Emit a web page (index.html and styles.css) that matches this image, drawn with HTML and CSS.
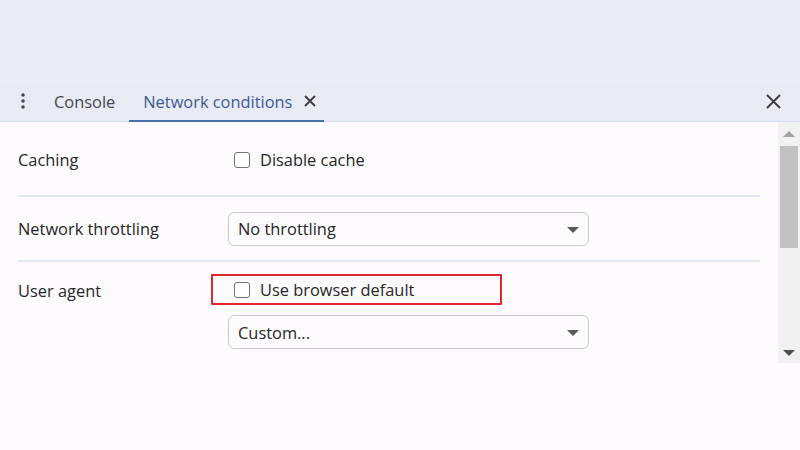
FILE: index.html
```html
<!DOCTYPE html>
<html>
<head>
<meta charset="utf-8">
<link rel="stylesheet" href="styles.css">
</head>
<body>
<div class="top"></div>
<div class="tabbar">
  <div class="menu">
    <svg width="6" height="16" viewBox="0 0 6 16"><circle cx="3" cy="2" r="1.8"/><circle cx="3" cy="8" r="1.8"/><circle cx="3" cy="14" r="1.8"/></svg>
  </div>
  <div class="tab">Console</div>
  <div class="tab active">Network conditions
    <svg class="tabx" width="12" height="12" viewBox="0 0 12 12"><path d="M1 1L11 11M11 1L1 11"/></svg>
  </div>
  <div class="spacer"></div>
  <div class="close">
    <svg width="15" height="15" viewBox="0 0 15 15"><path d="M1 1L14 14M14 1L1 14"/></svg>
  </div>
</div>
<div class="main">
  <div class="content">
    <div class="row row1">
      <div class="label">Caching</div>
      <div class="value">
        <label class="check"><span class="box"></span>Disable cache</label>
      </div>
    </div>
    <div class="row row2">
      <div class="label">Network throttling</div>
      <div class="value">
        <div class="select">No throttling<span class="arrow"></span></div>
      </div>
    </div>
    <div class="row row3">
      <div class="label">User agent</div>
      <div class="value stack">
        <div class="highlighted">
          <label class="check"><span class="box"></span>Use browser default</label>
          <div class="redbox"></div>
        </div>
        <div class="select">Custom...<span class="arrow"></span></div>
      </div>
    </div>
  </div>
  <div class="scrollbar">
    <div class="sb-up"></div>
    <div class="sb-thumb"></div>
    <div class="sb-track"></div>
    <div class="sb-down"></div>
  </div>
</div>
</body>
</html>
```
FILE: styles.css
```css
* { box-sizing: border-box; }
html, body { margin: 0; padding: 0; }
body {
  width: 800px;
  height: 450px;
  overflow: hidden;
  background: #fdfbfe;
  font-family: "Open Sans", "Noto Sans", sans-serif;
  font-size: 16.4px;
  color: #262626;
}
.top {
  height: 80px;
  background: #e8eaf4;
}
.tabbar {
  height: 42px;
  background: #e8eaf4;
  border-top: 1px solid #f0f2f9;
  border-bottom: 1px solid #d4deee;
  display: flex;
  align-items: stretch;
}
.menu {
  width: 40px;
  display: flex;
  align-items: center;
  justify-content: center;
  padding-left: 6px;
}
.menu svg { fill: #45474d; }
.tab {
  display: flex;
  align-items: center;
  padding: 0 14px;
  padding-top: 1px;
  color: #46484e;
  border-bottom: 2px solid transparent;
  margin-bottom: -1px;
}
.tab.active {
  color: #3c5a95;
  border-bottom-color: #4a6fb0;
  padding-right: 8px;
}
.tabx {
  margin-left: 12px;
  stroke: #3a3c42;
  stroke-width: 1.8;
  fill: none;
}
.spacer { flex: 1; }
.close {
  width: 46px;
  display: flex;
  align-items: center;
  justify-content: center;
}
.close svg {
  stroke: #3a3c42;
  stroke-width: 1.8;
  fill: none;
  margin-right: 8px;
}
.main {
  display: flex;
  align-items: flex-start;
}
.content {
  flex: 1;
  padding: 0 18px;
}
.row {
  display: flex;
  align-items: center;
  border-bottom: 2px solid #e2e9f5;
}
.row1 { height: 75px; padding-top: 2px; }
.row2 { height: 65px; }
.row3 { border-bottom: none; align-items: flex-start; padding-top: 12px; }
.label {
  width: 210px;
  flex: none;
}
.row3 .label { padding-top: 5px; }
.value { flex: 1; }
.stack {
  display: flex;
  flex-direction: column;
  gap: 10px;
}
.check {
  display: flex;
  align-items: center;
  padding-left: 6px;
}
.box {
  width: 16px;
  height: 16px;
  border: 1.6px solid #717171;
  border-radius: 3px;
  margin-right: 10px;
  background: #fff;
}
.highlighted {
  position: relative;
  height: 31px;
  display: flex;
  align-items: center;
}
.redbox {
  position: absolute;
  left: -17px;
  top: 0;
  width: 291px;
  height: 31px;
  border: 2px solid #e3262c;
  border-radius: 1px;
}
.select {
  position: relative;
  width: 361px;
  height: 34px;
  border: 1px solid #cbcbcb;
  border-radius: 6px;
  display: flex;
  align-items: center;
  padding-left: 9px;
  background: #fdfbfe;
}
.arrow {
  position: absolute;
  right: 9px;
  top: 14px;
  width: 0;
  height: 0;
  border-left: 6px solid transparent;
  border-right: 6px solid transparent;
  border-top: 6px solid #5a5a5a;
}
.scrollbar {
  width: 22px;
  height: 241px;
  background: #f1f1f1;
  display: flex;
  flex-direction: column;
  align-items: center;
}
.sb-up {
  height: 24px;
  width: 100%;
  display: flex;
  align-items: center;
  justify-content: center;
}
.sb-up::before {
  content: "";
  border-left: 6px solid transparent;
  border-right: 6px solid transparent;
  border-bottom: 6px solid #a3a3a3;
}
.sb-thumb {
  width: 18px;
  height: 102px;
  background: #c1c1c1;
}
.sb-track { flex: 1; }
.sb-down {
  height: 20px;
  width: 100%;
  display: flex;
  align-items: center;
  justify-content: center;
}
.sb-down::before {
  content: "";
  border-left: 6px solid transparent;
  border-right: 6px solid transparent;
  border-top: 6px solid #505050;
}
```
